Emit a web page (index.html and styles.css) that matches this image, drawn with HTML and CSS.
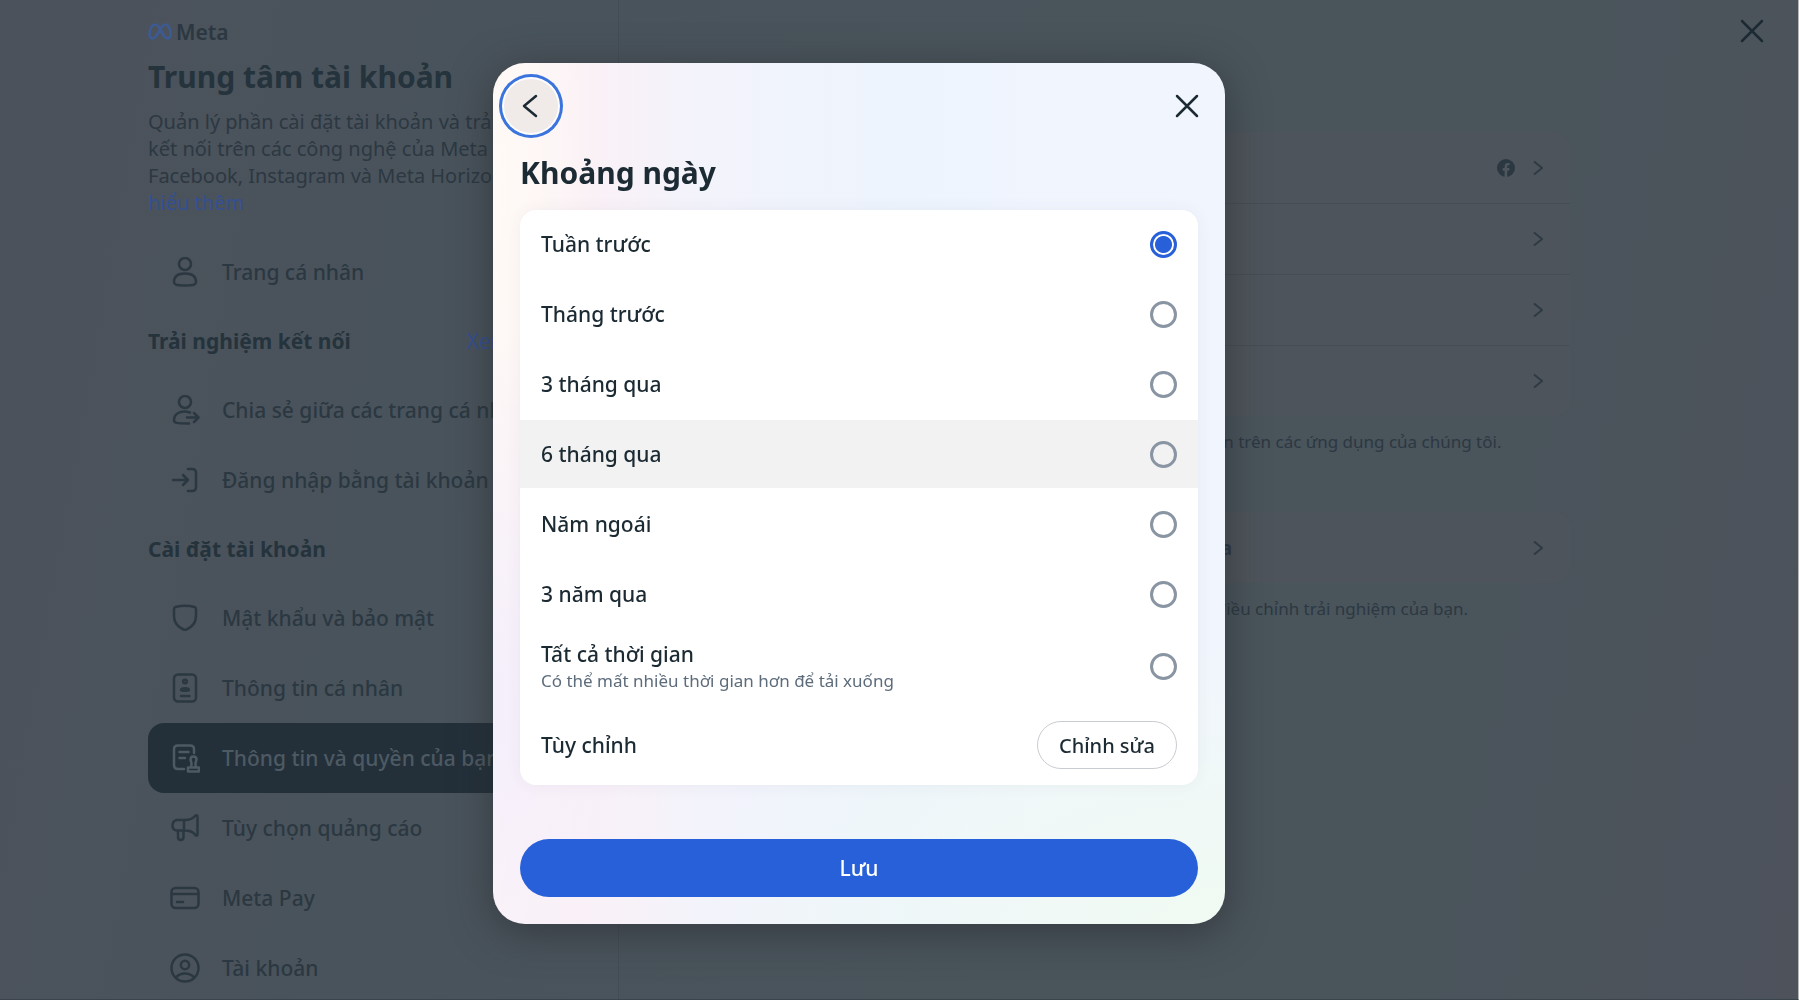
FILE: index.html
```html
<!DOCTYPE html>
<html lang="vi">
  <head>
    <meta charset="utf-8">
    <meta name="viewport" content="width=device-width">
    <title>Trung tâm tài khoản</title>
    <link rel="stylesheet" href="styles.css">
  </head>
  <body>

    <div class="page">

      <aside class="sidebar">
        <div class="brand">
          <svg width="24" height="17" viewBox="0 0 24 17" fill="none" stroke="currentColor" stroke-width="2.600" stroke-linejoin="round">
            <path d="M12 5.500C10 2.500 8.500 1.500 7 1.500C4 1.500 1.500 6 1.500 11C1.500 14 2.800 15.500 4.700 15.500C7 15.500 8.500 13 12 7C13.500 4 15 1.500 17.300 1.500C20.300 1.500 22.500 6 22.500 11C22.500 14 21.300 15.500 19.400 15.500C17 15.500 15.500 12.500 12 5.500Z"/>
          </svg>
          <span>Meta</span>
        </div>
        <h1 class="page-title">Trung tâm tài khoản</h1>
        <p class="intro">Quản lý phần cài đặt tài khoản và trải<br>kết nối trên các công nghệ của Meta<br>Facebook, Instagram và Meta Horizon.<br><a href="#">hiểu thêm</a></p>

        <nav class="menu">
          <a class="menu-item" href="#">
            <svg class="icon" viewBox="0 0 30 30"><circle cx="15" cy="7" r="6"/><path d="M4 25C4 19 8.500 16.500 15 16.500S26 19 26 25C26 27.500 24.500 28.500 15 28.500S4 27.500 4 25Z"/></svg>
            <span>Trang cá nhân</span>
          </a>

          <div class="menu-head">
            <h2>Trải nghiệm kết nối</h2>
            <a href="#">Xem tất cả</a>
          </div>
          <a class="menu-item" href="#">
            <svg class="icon" viewBox="0 0 30 30"><circle cx="15" cy="7" r="6"/><path d="M20 17.500C12 15 4 18 4 25C4 28 6 28.500 19 28.500M17 22.500H28M24 18L28.500 22.500L24 27"/></svg>
            <span>Chia sẻ giữa các trang cá nhân</span>
          </a>
          <a class="menu-item" href="#">
            <svg class="icon" viewBox="0 0 30 30"><path d="M18 4H22Q26 4 26 8V22Q26 26 22 26H18M3 15H18M13 10L18 15L13 20"/></svg>
            <span>Đăng nhập bằng tài khoản</span>
          </a>

          <div class="menu-head">
            <h2>Cài đặt tài khoản</h2>
          </div>
          <a class="menu-item" href="#">
            <svg class="icon" viewBox="0 0 30 30"><path d="M4 6Q4 4.500 5.500 4Q15 1.500 24.500 4Q26 4.500 26 6V13C26 19 22 24 16.500 26.500Q15 27 13.500 26.500C8 24 4 19 4 13Z"/></svg>
            <span>Mật khẩu và bảo mật</span>
          </a>
          <a class="menu-item" href="#">
            <svg class="icon" viewBox="0 0 30 30"><rect x="4" y="1.500" width="22" height="27" rx="4"/><circle cx="15" cy="8.500" r="1.800"/><path d="M11 17C11 14.500 19 14.500 19 17C19 18 11 18 11 17ZM11 23H19.500"/></svg>
            <span>Thông tin cá nhân</span>
          </a>
          <a class="menu-item selected" href="#">
            <svg class="icon" viewBox="0 0 30 30"><path d="M14 26H8Q4 26 4 22V6Q4 2.500 8 2.500H20Q24 2.500 24 6V10M9.500 9H18.500M9.500 15H15"/><path d="M18 28.500H29V24.500H18ZM21 24C22.500 20 20.500 18 20.500 16.500Q20.500 13.500 23.500 13.500T26.500 16.500C26.500 18 24.500 20 26 24"/></svg>
            <span>Thông tin và quyền của bạn</span>
          </a>
          <a class="menu-item" href="#">
            <svg class="icon" viewBox="0 0 30 30"><path d="M15 7C20 7 23 5.500 25 3Q27.500 1 27.500 4V21Q27.500 24 25 21.500C23 19 20 17.500 15 17.500H6.500Q2.500 17 2.500 12.500T6.500 7ZM14 7V17.500M8 17.500V24C8 28 13.500 28 13.500 24V17.500"/></svg>
            <span>Tùy chọn quảng cáo</span>
          </a>
          <a class="menu-item" href="#">
            <svg class="icon" viewBox="0 0 30 30"><rect x="1.500" y="5" width="27" height="20" rx="4"/><path d="M2 11H28M7 19H13"/></svg>
            <span>Meta Pay</span>
          </a>
          <a class="menu-item" href="#">
            <svg class="icon" viewBox="0 0 30 30"><circle cx="15" cy="15" r="13.500"/><circle cx="15" cy="12" r="4.200"/><path d="M6 24.500Q9 20.500 15 20.500T24 24.500"/></svg>
            <span>Tài khoản</span>
          </a>
        </nav>
      </aside>

      <main class="content">
        <div class="card">
          <a class="card-row" href="#">
            <svg width="18" height="18" viewBox="0 0 18 18"><circle cx="9" cy="9" r="9" fill="#2b3841"/><path d="M7.600 18V11.700H5.700V9H7.600V7.500C7.600 5 8.900 3.900 11 3.900L12.600 4V6.300H11.500C10.500 6.300 10.200 6.800 10.200 7.600V9H12.500L12.100 11.700H10.200V18Z" fill="#4e555d"/></svg>
            <svg class="chevron" viewBox="0 0 10 16"><path d="M1 1.500L9 8L1 14.500"/></svg>
          </a>
          <a class="card-row" href="#"><svg class="chevron" viewBox="0 0 10 16"><path d="M1 1.500L9 8L1 14.500"/></svg></a>
          <a class="card-row" href="#"><svg class="chevron" viewBox="0 0 10 16"><path d="M1 1.500L9 8L1 14.500"/></svg></a>
          <a class="card-row" href="#"><svg class="chevron" viewBox="0 0 10 16"><path d="M1 1.500L9 8L1 14.500"/></svg></a>
        </div>
        <p class="note">Xem, tải xuống hoặc chuyển thông tin và xóa hoạt động của bạn trên các ứng dụng của chúng tôi.</p>

        <div class="card">
          <a class="card-row" href="#">
            <span>Thông tin hoạt động ở các đối tác quảng cáo của Meta</span>
            <svg class="chevron" viewBox="0 0 10 16"><path d="M1 1.500L9 8L1 14.500"/></svg>
          </a>
        </div>
        <p class="note">Xem kỹ các quyền bạn đã cấp cho chúng tôi và cách chúng tôi điều chỉnh trải nghiệm của bạn.</p>
      </main>

      <button class="page-close" type="button" aria-label="Đóng trang">
        <svg viewBox="0 0 24 24"><path d="M2 2L22 22M22 2L2 22"/></svg>
      </button>
    </div>

    <div class="overlay">
      <form class="modal" role="dialog" aria-labelledby="modalTitle">
        <div class="modal-bar">
          <button class="round back" type="button" aria-label="Quay lại">
            <svg viewBox="0 0 24 24"><path d="M17 2L5 12L17 22"/></svg>
          </button>
          <button class="round" type="button" aria-label="Đóng">
            <svg viewBox="0 0 24 24"><path d="M2 2L22 22M22 2L2 22"/></svg>
          </button>
        </div>

        <div class="modal-body">
          <h2 id="modalTitle">Khoảng ngày</h2>

          <div class="options">
            <label class="option"><span>Tuần trước</span><input type="radio" name="range" checked></label>
            <label class="option"><span>Tháng trước</span><input type="radio" name="range"></label>
            <label class="option"><span>3 tháng qua</span><input type="radio" name="range"></label>
            <label class="option hovered"><span>6 tháng qua</span><input type="radio" name="range"></label>
            <label class="option"><span>Năm ngoái</span><input type="radio" name="range"></label>
            <label class="option"><span>3 năm qua</span><input type="radio" name="range"></label>
            <label class="option tall"><span>Tất cả thời gian<small>Có thể mất nhiều thời gian hơn để tải xuống</small></span><input type="radio" name="range"></label>
            <div class="option custom"><span>Tùy chỉnh</span><button class="edit" type="button">Chỉnh sửa</button></div>
          </div>

          <button class="save" type="submit">Lưu</button>
        </div>
      </form>
    </div>

  </body>
</html>
```
FILE: styles.css
```css
* {
  box-sizing: border-box;
}

body {
  margin: 0;
  overflow: hidden;
  font-family: "Noto Sans", "Open Sans", sans-serif;
  color: #2b3841;
}

h1, h2, p {
  margin: 0;
}

a {
  color: inherit;
  text-decoration: none;
}

button {
  font-family: inherit;
  padding: 0;
  border: 0;
  background: none;
  cursor: pointer;
}

svg {
  flex: none;
}

/* page behind the dialog */
.page {
  display: flex;
  height: 100vh;
  overflow: hidden;
  background: linear-gradient(100deg, #4c525b 0%, #49535b 25%, #49545b 60%, #4a545b 80%, #4d525b 100%);
  border-right: 1px solid #b4b8bb;
  border-bottom: 1px solid #3b444b;
}

.sidebar {
  flex: none;
  width: 619px;
  padding: 18px 48px 0 148px;
  border-right: 1px solid #444d55;
}

.brand {
  display: flex;
  align-items: center;
  gap: 4px;
  height: 27px;
  font-size: 21px;
  font-weight: 600;
}

.brand svg {
  color: #3d5a92;
}

.page-title {
  margin-top: 12px;
  font-size: 30px;
  line-height: 40px;
  color: #25333c;
}

.intro {
  margin-top: 11px;
  font-size: 20px;
  line-height: 27px;
  white-space: nowrap;
  color: #2c3842;
}

.intro a,
.menu-head a {
  color: #345093;
}

.menu {
  margin-top: 21px;
}

.menu-item {
  display: flex;
  align-items: center;
  gap: 22px;
  height: 70px;
  padding-left: 22px;
  font-size: 21px;
  font-weight: 500;
  white-space: nowrap;
  border-radius: 16px;
}

.menu-item.selected {
  background: #23303a;
  color: #4e5a63;
}

.icon {
  width: 30px;
  height: 30px;
  fill: none;
  stroke: currentColor;
  stroke-width: 2.5;
  stroke-linecap: round;
  stroke-linejoin: round;
}

.menu-head {
  display: flex;
  align-items: center;
  justify-content: space-between;
  height: 68px;
  font-size: 21px;
}

.menu-head h2 {
  font-size: 21px;
  color: #25333c;
}

.content {
  flex: 1;
  padding: 132px 228px 0 80px;
}

.card {
  background: #4e545b;
  border-radius: 16px;
}

.card-row {
  display: flex;
  align-items: center;
  justify-content: flex-end;
  gap: 18px;
  height: 71px;
  padding: 0 27px 0 22px;
  font-size: 19px;
  font-weight: 700;
}

.card-row + .card-row {
  border-top: 1px solid #454d55;
}

.card-row span {
  flex: 1;
}

.chevron {
  width: 10px;
  height: 16px;
  fill: none;
  stroke: #2e3a44;
  stroke-width: 2;
}

.note {
  margin: 13px 0 57px;
  padding-left: 22px;
  font-size: 17px;
  line-height: 26px;
  white-space: nowrap;
  color: #2c3842;
}

.page-close {
  position: absolute;
  top: 19px;
  right: 35px;
  width: 24px;
  height: 24px;
}

.page-close svg,
.round svg {
  display: block;
  width: 24px;
  height: 24px;
  fill: none;
  stroke: #1c2b33;
  stroke-width: 2.500;
  stroke-linecap: round;
}

/* dialog */
.overlay {
  position: fixed;
  inset: 0;
  display: flex;
  justify-content: center;
  align-items: flex-start;
  padding: 63px 81px 0 0;
}

.modal {
  width: 732px;
  border-radius: 32px;
  background:
    radial-gradient(ellipse 75% 35% at 100% 100%, #f0fbf2, transparent),
    radial-gradient(ellipse 25% 45% at 0 75%, #f5effc, transparent),
    radial-gradient(ellipse 14% 60% at 0 15%, #fffaf6, transparent),
    linear-gradient(to right, #fdf5f5 0%, #fbf1f6 12%, #f3f3fb 28%, #edf4fd 55%, #f0f5fe 75%, #f1f5fe 100%);
  box-shadow: 0 8px 40px rgba(40, 42, 46, 0.6);
}

.modal-bar {
  display: flex;
  justify-content: space-between;
  padding: 15px 10px 0;
}

.round {
  display: flex;
  align-items: center;
  justify-content: center;
  width: 56px;
  height: 56px;
  border-radius: 50%;
}

.round.back {
  border: 1px solid #fff;
  background: #f0eae9;
  box-shadow: 0 0 0 1px #fff, 0 0 0 4px #3b74dd;
}

.round.back svg {
  stroke-linejoin: round;
}

.modal-body {
  padding: 19px 27px 27px;
}

.modal-body h2 {
  font-size: 30px;
  line-height: 40px;
  color: #1c2b33;
}

.options {
  display: flex;
  flex-direction: column;
  gap: 2px;
  margin-top: 17px;
  border-radius: 16px;
  background: #fff;
  box-shadow: 0 0 16px rgba(60, 60, 90, 0.06);
}

.option {
  display: flex;
  align-items: center;
  justify-content: space-between;
  min-height: 68px;
  padding: 0 21px;
  font-size: 21px;
  font-weight: 500;
  line-height: 28px;
  color: #1c2b33;
}

.option.hovered {
  background: #f2f2f2;
}

.option.tall {
  height: 73px;
}

.option small {
  display: block;
  font-size: 17px;
  font-weight: 400;
  line-height: 26px;
  color: #5d6c7b;
}

.option input {
  appearance: none;
  flex: none;
  width: 27px;
  height: 27px;
  margin: 0;
  border: 3px solid #8a95a3;
  border-radius: 50%;
}

.option input:checked {
  border-color: #2860d9;
  background: radial-gradient(circle, #2860d9 8px, transparent 9px);
}

.option.custom {
  height: 80px;
}

.edit {
  height: 48px;
  padding: 0 21px;
  border: 1px solid #c9ccd2;
  border-radius: 24px;
  font-size: 20px;
  font-weight: 500;
  color: #1c2b33;
}

.save {
  display: block;
  width: 100%;
  height: 58px;
  margin-top: 54px;
  border-radius: 29px;
  background: #2860d9;
  color: #fff;
  font-size: 21px;
  font-weight: 500;
}
```
